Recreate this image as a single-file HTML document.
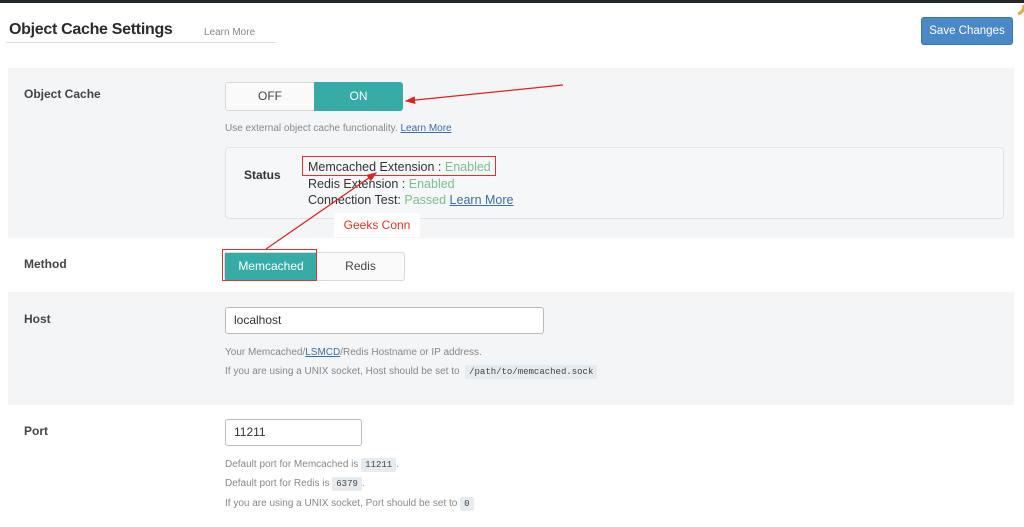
<!DOCTYPE html>
<html><head><style>
*{margin:0;padding:0;box-sizing:border-box}
body{width:1024px;height:527px;background:#fff;font-family:"Liberation Sans",sans-serif;position:relative;overflow:hidden;color:#333}
.a{position:absolute}
.sec{position:absolute;left:8px;width:1006px;background:#f3f5f6}
.lbl{position:absolute;left:24px;font-size:12px;font-weight:bold;color:#444}
.desc{font-size:10px;color:#888}
.code{background:#e6ebf0;font-family:"Liberation Mono",monospace;font-size:9px;color:#444;padding:2px 4px;border-radius:2px}
a{color:#3a6fa8;text-decoration:underline}
.green{color:#7cbf8f}
</style></head><body>
<div class="a" style="left:0;top:0;width:1024px;height:3px;background:#23262d"></div>
<div class="a" style="left:9px;top:21px;font-size:16px;font-weight:bold;color:#2b2b2b;letter-spacing:-0.3px">Object Cache Settings</div>
<div class="a" style="left:204px;top:27px;font-size:10px;color:#888">Learn More</div>
<div class="a" style="left:6px;top:42px;width:270px;height:1px;background:#ddd"></div>
<div class="a" style="left:921px;top:17px;width:92px;height:28px;background:#4a88c8;border-radius:3px;color:#fff;font-size:11.5px;text-align:center;line-height:26px;border:1px solid #3b74b0">Save Changes</div>

<div class="sec" style="top:68px;height:170px"></div>
<div class="lbl" style="top:87px">Object Cache</div>
<div class="a" style="left:225px;top:82px;width:177px;height:29px;border:1px solid #d8d8d8;border-radius:3px;background:#fafafa;font-size:12px">
<div class="a" style="left:0;top:0;width:88px;height:27px;text-align:center;line-height:27px;color:#444">OFF</div>
<div class="a" style="left:88px;top:-1px;width:89px;height:29px;background:#37aca6;color:#fff;text-align:center;line-height:29px;border-radius:0 3px 3px 0">ON</div></div>
<div class="a desc" style="left:225px;top:123px">Use external object cache functionality. <a>Learn More</a></div>
<div class="a" style="left:225px;top:147px;width:779px;height:72px;border:1px solid #e2e2e2;border-radius:4px;background:#f6f7f8"></div>
<div class="a" style="left:244px;top:168px;font-size:12px;font-weight:bold;color:#333">Status</div>
<div class="a" style="left:308px;top:159px;font-size:12.5px;line-height:16.5px;color:#333">Memcached Extension : <span class="green">Enabled</span><br>Redis Extension : <span class="green">Enabled</span><br>Connection Test: <span class="green">Passed</span> <a>Learn More</a></div>
<div class="a" style="left:302px;top:156px;width:194px;height:20px;border:1.5px solid #d33"></div>
<div class="a" style="left:334px;top:213px;width:86px;height:24px;background:#fff;color:#d32;font-size:12px;text-align:center;line-height:24px">Geeks Conn</div>

<div class="lbl" style="top:257px">Method</div>
<div class="a" style="left:224px;top:252px;width:181px;height:29px;border:1px solid #d8d8d8;border-radius:3px;background:#f9f9f9;font-size:12px">
<div class="a" style="left:0;top:0;width:92px;height:27px;background:#37aca6;color:#fff;text-align:center;line-height:27px">Memcached</div>
<div class="a" style="left:92px;top:0;width:87px;height:27px;text-align:center;line-height:27px;color:#444">Redis</div></div>
<div class="a" style="left:222px;top:249px;width:95px;height:32px;border:1.5px solid #d33"></div>

<div class="sec" style="top:292px;height:113px"></div>
<div class="lbl" style="top:312px">Host</div>
<div class="a" style="left:225px;top:307px;width:319px;height:27px;border:1px solid #bbb;border-radius:3px;background:#fff;font-size:12px;line-height:25px;padding-left:8px">localhost</div>
<div class="a desc" style="left:225px;top:347px">Your Memcached/<a>LSMCD</a>/Redis Hostname or IP address.</div>
<div class="a desc" style="left:225px;top:366px">If you are using a UNIX socket, Host should be set to &nbsp;<span class="code">/path/to/memcached.sock</span></div>

<div class="lbl" style="top:424px">Port</div>
<div class="a" style="left:225px;top:419px;width:137px;height:27px;border:1px solid #bbb;border-radius:3px;background:#fff;font-size:12px;line-height:25px;padding-left:8px">11211</div>
<div class="a desc" style="left:225px;top:459px">Default port for Memcached is <span class="code">11211</span>.</div>
<div class="a desc" style="left:225px;top:478px">Default port for Redis is <span class="code">6379</span>.</div>
<div class="a desc" style="left:225px;top:498px">If you are using a UNIX socket, Port should be set to <span class="code">0</span></div>

<svg class="a" style="left:0;top:0" width="1024" height="527">
<defs><marker id="m" markerWidth="8" markerHeight="6" refX="7" refY="3" orient="auto"><path d="M0,0L8,3L0,6z" fill="#d22"/></marker></defs>
<line x1="563" y1="85" x2="406" y2="101" stroke="#d22" stroke-width="1.3" marker-end="url(#m)"/>
<line x1="266" y1="249" x2="376" y2="173" stroke="#d22" stroke-width="1.3" marker-end="url(#m)"/>
<path d="M1018 14 Q1024 12 1024 5" stroke="#e8a640" stroke-width="3" fill="none"/>
</svg>
</body></html>
